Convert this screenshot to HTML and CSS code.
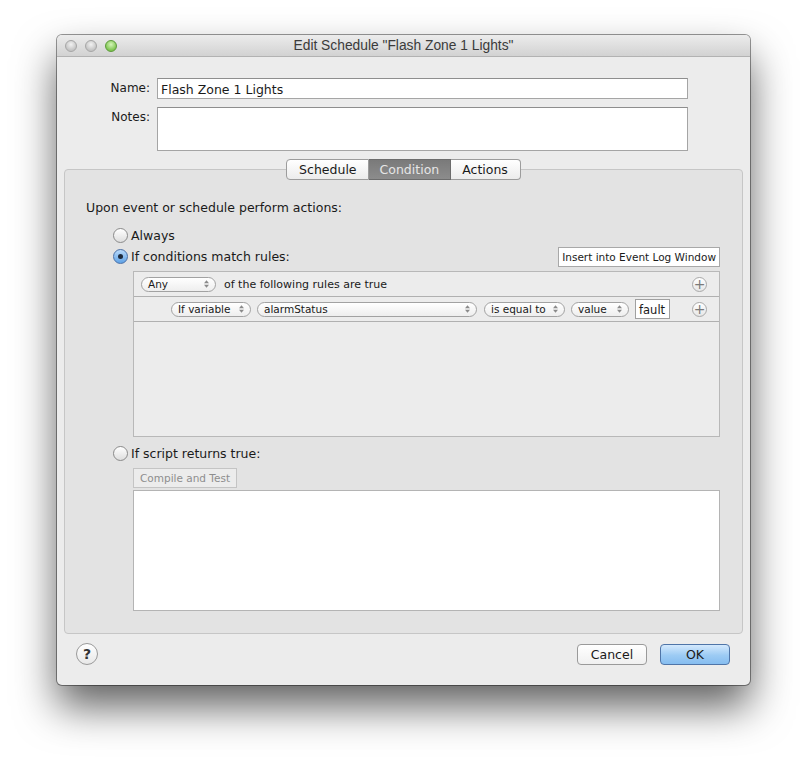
FILE: index.html
```html
<!DOCTYPE html>
<html>
    <head>
        <meta charset="utf-8">
        <title>Edit Schedule</title>
        <link rel="stylesheet" href="styles.css">
    </head>
    <body>
        <div class="window">
            <div class="titlebar">
                <div class="lights">
                    <span class="light"></span>
                    <span class="light"></span>
                    <span class="light green"></span>
                </div>
                <div class="title">Edit Schedule "Flash Zone 1 Lights"</div>
                <div class="lights"></div>
            </div>

            <div class="fields">
                <div class="field-row">
                    <label class="field-label">Name:</label>
                    <div class="textfield">Flash Zone 1 Lights</div>
                </div>
                <div class="field-row">
                    <label class="field-label">Notes:</label>
                    <div class="textfield notes"></div>
                </div>
            </div>

            <!-- tab view -->
            <div class="tabs">
                <span class="tab">Schedule</span>
                <span class="tab selected">Condition</span>
                <span class="tab">Actions</span>
            </div>
            <div class="tabbox">
                <div class="heading">Upon event or schedule perform actions:</div>

                <div class="radio-row">
                    <span class="radio"></span>
                    <span>Always</span>
                </div>
                <div class="radio-row">
                    <span class="radio on"></span>
                    <span class="grow">If conditions match rules:</span>
                    <span class="squarebtn">Insert into Event Log Window</span>
                </div>

                <div class="rules">
                    <div class="rule">
                        <span class="popup w-any">Any<svg class="arrows" viewBox="0 0 6 9"><path d="M3 0 L6 3.5 H0 Z M3 9 L6 5.5 H0 Z"/></svg></span>
                        <span class="rule-text">of the following rules are true</span>
                        <span class="plus">+</span>
                    </div>
                    <div class="rule sub">
                        <span class="popup w-var">If variable<svg class="arrows" viewBox="0 0 6 9"><path d="M3 0 L6 3.5 H0 Z M3 9 L6 5.5 H0 Z"/></svg></span>
                        <span class="popup w-name">alarmStatus<svg class="arrows" viewBox="0 0 6 9"><path d="M3 0 L6 3.5 H0 Z M3 9 L6 5.5 H0 Z"/></svg></span>
                        <span class="popup w-op">is equal to<svg class="arrows" viewBox="0 0 6 9"><path d="M3 0 L6 3.5 H0 Z M3 9 L6 5.5 H0 Z"/></svg></span>
                        <span class="popup w-val">value<svg class="arrows" viewBox="0 0 6 9"><path d="M3 0 L6 3.5 H0 Z M3 9 L6 5.5 H0 Z"/></svg></span>
                        <span class="smallfield">fault</span>
                        <span class="plus">+</span>
                    </div>
                </div>

                <div class="radio-row script-row">
                    <span class="radio"></span>
                    <span>If script returns true:</span>
                </div>
                <div class="script">
                    <span class="squarebtn disabled">Compile and Test</span>
                    <div class="script-area"></div>
                </div>
            </div>

            <div class="footer">
                <span class="help">?</span>
                <div class="buttons">
                    <span class="button">Cancel</span>
                    <span class="button default">OK</span>
                </div>
            </div>
        </div>
    </body>
</html>
```

FILE: styles.css
```css
html, body{
    height: 100%;
}
body{
    margin: 0;
    padding-top: 35px;
    box-sizing: border-box;
    min-height: 764px;
    background: #ffffff;
    font-family: "DejaVu Sans", "Liberation Sans", sans-serif;
    font-size: 12px;
    color: #1a1a1a;
}

.window{
    width: 693px;
    height: 650px;
    margin-left: 57px;
    background: #ececec;
    border-radius: 5px;
    box-shadow: 0 0 0 1px rgba(0,0,0,0.4), 0 22px 42px rgba(0,0,0,0.62);
    display: flex;
    flex-direction: column;
}

/* title bar */
.titlebar{
    height: 22px;
    flex: none;
    display: flex;
    align-items: center;
    background: linear-gradient(#ececec, #d2d2d2);
    border-bottom: 1px solid #b2b2b2;
    border-radius: 5px 5px 0 0;
    box-sizing: border-box;
}
.lights{
    display: flex;
    gap: 8px;
    padding-left: 8px;
    width: 80px;
    flex: none;
}
.light{
    width: 12px;
    height: 12px;
    border-radius: 50%;
    box-sizing: border-box;
    border: 1px solid #a6a6a6;
    background: radial-gradient(circle at 50% 35%, #f2f2f2, #c4c4c4 70%);
}
.light.green{
    border-color: #5c9a3a;
    background: radial-gradient(circle at 50% 35%, #d5f5b8, #7fc551 70%);
}
.title{
    flex: 1;
    text-align: center;
    font-family: "Liberation Sans", sans-serif;
    font-size: 13.8px;
    color: #3b3b3b;
}

/* name / notes */
.fields{
    padding-top: 21px;
}
.field-row{
    display: flex;
    margin-bottom: 8px;
}
.field-label{
    width: 93px;
    text-align: right;
    padding-right: 7px;
    padding-top: 3px;
    box-sizing: content-box;
}
.textfield{
    width: 531px;
    height: 21px;
    box-sizing: border-box;
    background: #fff;
    border: 1px solid #a5a5a5;
    border-top-color: #8e8e8e;
    padding: 3px 3px 0;
    font-size: 12.5px;
}
.textfield.notes{
    height: 44px;
}

/* tabs */
.tabs{
    display: flex;
    justify-content: center;
    margin-bottom: -11px;
    position: relative;
    z-index: 1;
}
.tab{
    height: 21px;
    box-sizing: border-box;
    padding: 0 11px;
    display: flex;
    align-items: center;
    background: linear-gradient(#ffffff, #ececec);
    border: 1px solid #9c9c9c;
    border-left: none;
    font-size: 12.5px;
}
.tab:first-child{
    border-left: 1px solid #9c9c9c;
    border-radius: 4px 0 0 4px;
    padding: 0 11px 0 12px;
}
.tab:last-child{
    border-radius: 0 4px 4px 0;
    padding: 0 12px 0 11px;
}
.tab.selected{
    background: linear-gradient(#7a7a7a, #8c8c8c);
    color: #e6e6e6;
    border-color: #6c6c6c;
}

.tabbox{
    margin: 0 7px;
    height: 465px;
    flex: none;
    box-sizing: border-box;
    background: #e3e3e3;
    border: 1px solid #c6c6c6;
    border-radius: 4px;
    padding: 30px 22px 0 21px;
}
.heading{
    font-size: 12.5px;
}

.radio-row{
    display: flex;
    align-items: center;
    height: 21px;
    padding-left: 27px;
    gap: 3px;
    font-size: 12.5px;
}
.radio-row:nth-child(2){
    margin-top: 10px;
}
.grow{
    flex: 1;
}
.radio{
    width: 15px;
    height: 15px;
    border-radius: 50%;
    box-sizing: border-box;
    border: 1px solid #8a8a8a;
    background: linear-gradient(#ffffff, #dedede);
    display: flex;
    align-items: center;
    justify-content: center;
}
.radio.on{
    border-color: #4a70a8;
    background: linear-gradient(#b9dafa, #5fa2e6);
}
.radio.on::after{
    content: "";
    width: 5px;
    height: 5px;
    border-radius: 50%;
    background: #1d2a3c;
}

.squarebtn{
    height: 20px;
    box-sizing: border-box;
    padding: 0 3px;
    display: flex;
    align-items: center;
    background: #fff;
    border: 1px solid #a8a8a8;
    font-size: 10.5px;
}
.squarebtn.disabled{
    background: #ececec;
    color: #8e8e8e;
    border-color: #c4c4c4;
    width: fit-content;
    padding: 0 6px;
}

/* rule editor */
.rules{
    margin: 4px 0 0 47px;
    height: 166px;
    box-sizing: border-box;
    background: #ececec;
    border: 1px solid #b8b8b8;
}
.rule{
    height: 25px;
    box-sizing: border-box;
    border-bottom: 1px solid #b0b0b0;
    display: flex;
    align-items: center;
    padding: 0 12px 0 7px;
    gap: 6px;
}
.rule.sub{
    padding-left: 37px;
}
.rule-text{
    flex: 1;
    margin-left: 2px;
    font-size: 11px;
}
.popup{
    flex: none;
    height: 15px;
    box-sizing: border-box;
    border: 1px solid #a2a2a2;
    border-radius: 8px;
    background: linear-gradient(#ffffff, #eeeeee);
    display: flex;
    align-items: center;
    justify-content: space-between;
    padding: 0 6px 0 6px;
    font-size: 10.5px;
}
.arrows{
    width: 5px;
    height: 8px;
    fill: #8a8a8a;
}
.w-any{ width: 75px; }
.w-var{ width: 80px; }
.w-name{ width: 220px; }
.w-op{ width: 81px; margin-left: 1px; }
.w-val{ width: 58px; }
.smallfield{
    flex: none;
    width: 35px;
    height: 20px;
    box-sizing: border-box;
    background: #fff;
    border: 1px solid #a0a0a0;
    font-size: 11.5px;
    padding: 3px 0 0 3px;
}
.plus{
    flex: none;
    width: 15px;
    height: 15px;
    margin-left: auto;
    box-sizing: border-box;
    border-radius: 50%;
    border: 1px solid #a8a8a8;
    background: linear-gradient(#ffffff, #e6e6e6);
    color: #7a7a7a;
    font-size: 14px;
    line-height: 12px;
    text-align: center;
}

.script-row{
    margin-top: 6px;
}
.script{
    margin: 4px 0 0 47px;
}
.script-area{
    margin-top: 2px;
    height: 119px;
    background: #fff;
    border: 1px solid #b4b4b4;
}

/* footer */
.footer{
    flex: 1;
    display: flex;
    align-items: flex-start;
    justify-content: space-between;
    padding: 9px 20px 0 19px;
}
.help{
    width: 22px;
    height: 22px;
    box-sizing: border-box;
    border-radius: 50%;
    border: 1px solid #9a9a9a;
    background: linear-gradient(#ffffff, #e8e8e8);
    font-weight: bold;
    font-size: 14px;
    display: flex;
    align-items: center;
    justify-content: center;
    color: #333;
}
.buttons{
    display: flex;
    gap: 13px;
    padding-top: 1px;
}
.button{
    width: 70px;
    height: 21px;
    box-sizing: border-box;
    border: 1px solid #9a9a9a;
    border-radius: 4px;
    background: linear-gradient(#ffffff, #f0f0f0);
    display: flex;
    align-items: center;
    justify-content: center;
    font-size: 12.5px;
}
.button.default{
    border-color: #4f75a8;
    background: linear-gradient(#d4e9fd, #9ccbf4 55%, #86bdf0);
}
```
